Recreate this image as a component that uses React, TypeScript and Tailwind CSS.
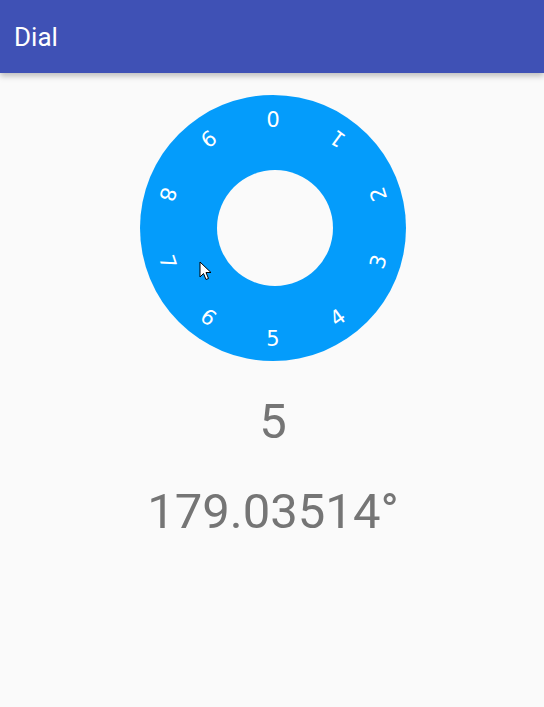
import React from "react";

const digits = [0, 1, 2, 3, 4, 5, 6, 7, 8, 9];

function Dial() {
  const r = 111;
  return (
    <div className="relative ml-[2px] w-[266px] h-[266px] rounded-full bg-[#049cfb]">
      {/* hole in the middle */}
      <div className="absolute left-[77px] top-[75px] w-[116px] h-[116px] rounded-full bg-[#fafafa]" />
      {digits.map((d) => {
        const deg = d * 36;
        const rad = (deg * Math.PI) / 180;
        return (
          <span
            key={d}
            className="absolute font-['DejaVu_Sans',sans-serif] text-[21px] leading-none text-white"
            style={{
              left: 133 + r * Math.sin(rad),
              top: 133 - r * Math.cos(rad),
              transform: `translate(-50%, -50%) rotate(${deg + 180}deg)`,
            }}
          >
            {d}
          </span>
        );
      })}
      {/* mouse pointer */}
      <svg
        className="absolute left-[59px] top-[166px]"
        width="14"
        height="21"
        viewBox="0 0 14 21"
      >
        <path
          d="M1 1 L1 16 L4.5 12.5 L7 18.5 L9.5 17.5 L7 11.5 L12 11.5 Z"
          fill="#fff"
          stroke="#000"
          strokeWidth="1"
          strokeLinejoin="round"
        />
      </svg>
    </div>
  );
}

export default function App() {
  return (
    <div className="min-h-[707px] bg-[#fafafa] font-['Roboto',sans-serif]">
      <div className="h-[73px] bg-[#3f51b5] flex items-center px-[14px] shadow-[0_3px_6px_rgba(0,0,0,0.25)]">
        <h1 className="text-white text-[26px] leading-none">Dial</h1>
      </div>

      <div className="flex flex-col items-center pt-[22px]">
        <Dial />
        <div className="mt-[30px] ml-[2px] text-[49px] leading-[61px] text-[#757575]">5</div>
        <div className="mt-[29px] ml-[2px] text-[49px] leading-[61px] text-[#757575]">
          179.03514°
        </div>
      </div>
    </div>
  );
}
